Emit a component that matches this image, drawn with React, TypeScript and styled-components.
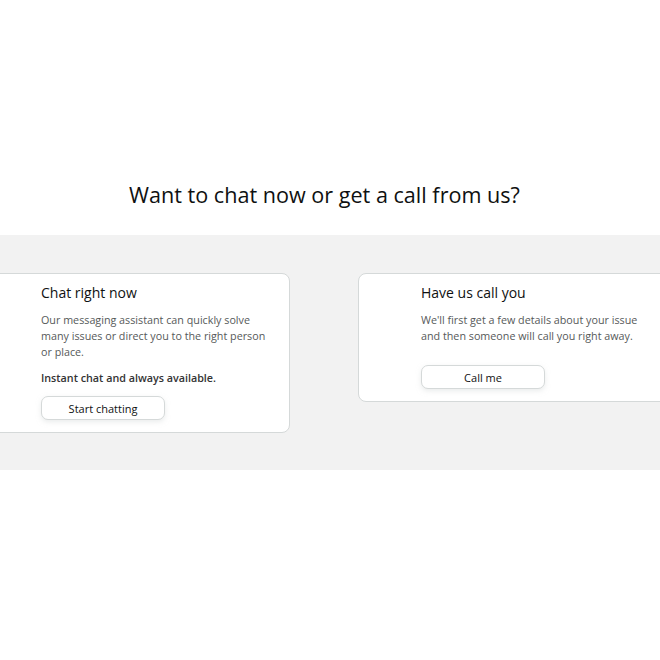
import { createGlobalStyle, styled } from 'styled-components';

const GlobalStyle = createGlobalStyle`
  html, body {
    margin: 0;
    padding: 0;
    background: #fff;
    font-family: "Open Sans", "Liberation Sans", sans-serif;
    color: #0f1111;
    overflow: hidden;
  }
`;

const Page = styled.div`
  width: 660px;
  height: 660px;
  display: flex;
  flex-direction: column;
`;

const Heading = styled.h1`
  margin: 0;
  padding: 180px 11px 25px 0;
  text-align: center;
  font-size: 21.6px;
  font-weight: 400;
  line-height: 30px;
  color: #0f1111;
`;

const Band = styled.div`
  background: #f2f2f2;
  height: 235px;
  padding-top: 38px;
  box-sizing: border-box;
`;

const CardRow = styled.div`
  display: flex;
  align-items: flex-start;
  gap: 68px;
  margin-left: -22px;
`;

const Card = styled.div`
  flex: 0 0 312px;
  box-sizing: border-box;
  background: #fff;
  border: 1px solid #d5d9d9;
  border-radius: 8px;
  padding: 9px 12px 12px 62px;
`;

const CardTitle = styled.h2`
  margin: 0 0 9px;
  font-size: 14px;
  font-weight: 400;
  line-height: 20px;
  color: #0f1111;
`;

const CardText = styled.p<{ $bold?: boolean }>`
  margin: 0 0 10px;
  font-size: 10.75px;
  line-height: 16px;
  color: ${(p) => (p.$bold ? '#333' : '#565959')};
  font-weight: ${(p) => (p.$bold ? 600 : 400)};
`;

const ActionButton = styled.button<{ $gap: number }>`
  display: block;
  margin-top: ${(p) => p.$gap}px;
  width: 124px;
  height: 24px;
  background: #fff;
  border: 1px solid #d5d9d9;
  border-radius: 7px;
  box-shadow: 0 2px 5px rgba(213, 217, 217, 0.5);
  font-family: inherit;
  font-size: 11px;
  color: #0f1111;
  cursor: pointer;
`;

export default function App() {
  return (
    <Page>
      <GlobalStyle />
      <Heading>Want to chat now or get a call from us?</Heading>
      <Band>
        <CardRow>
          <Card>
            <CardTitle>Chat right now</CardTitle>
            <CardText>
              Our messaging assistant can quickly solve many issues or direct you to the right person or
              place.
            </CardText>
            <CardText $bold>Instant chat and always available.</CardText>
            <ActionButton $gap={2}>Start chatting</ActionButton>
          </Card>
          <Card>
            <CardTitle>Have us call you</CardTitle>
            <CardText>We'll first get a few details about your issue and then someone will call you right away.</CardText>
            <ActionButton $gap={21}>Call me</ActionButton>
          </Card>
        </CardRow>
      </Band>
    </Page>
  );
}
